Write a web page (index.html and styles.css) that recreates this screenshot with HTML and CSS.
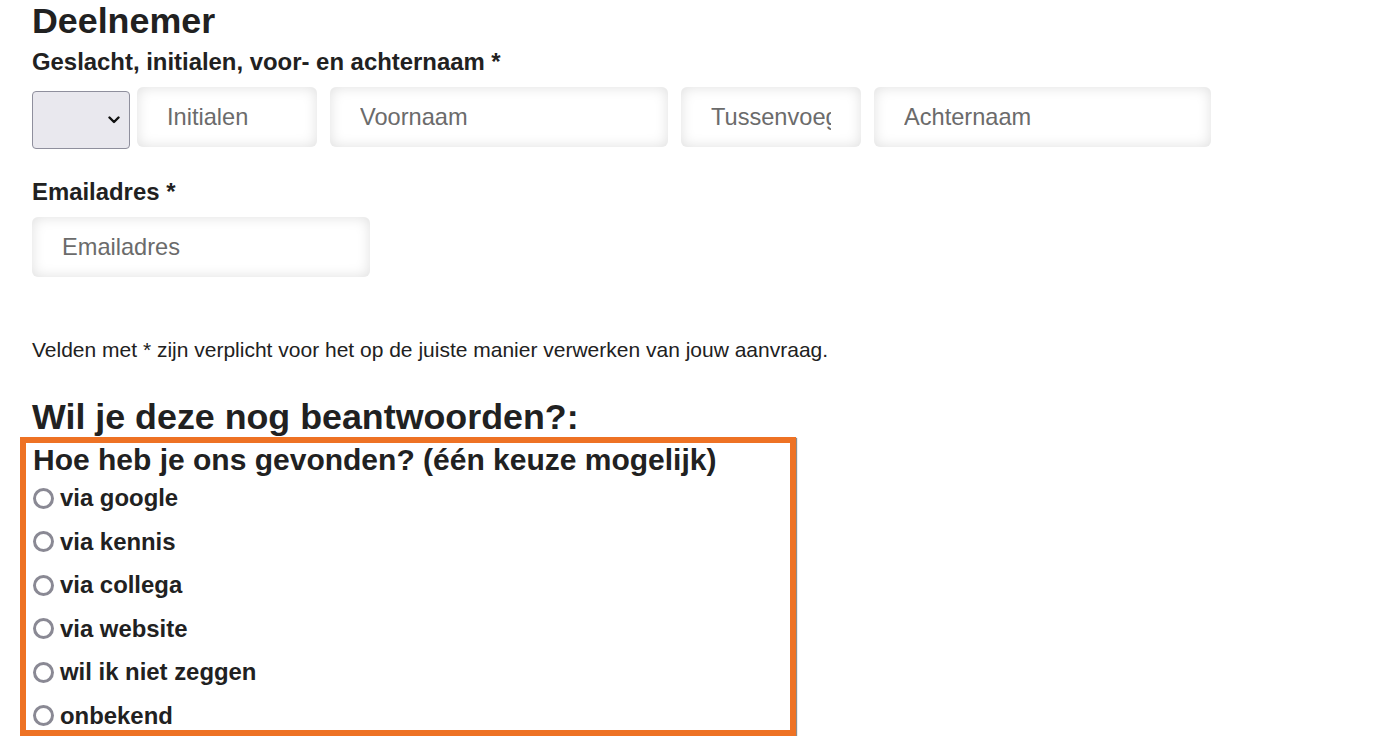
FILE: index.html
```html
<!DOCTYPE html>
<html lang="nl">
<head>
    <meta charset="UTF-8">
    <meta name="viewport" content="width=device-width, initial-scale=1.0">
    <title>Deelnemer</title>
    <link rel="stylesheet" href="styles.css">
</head>
<body>
    <div class="page">
        <h1 class="title">Deelnemer</h1>
        <label class="field-label">Geslacht, initialen, voor- en achternaam *</label>
        <div class="name-row">
            <div class="select-wrap">
                <select class="gender">
                    <option></option>
                    <option>Dhr.</option>
                    <option>Mevr.</option>
                </select>
                <svg class="chevron" width="12" height="8" viewBox="0 0 12 8">
                    <path d="M1.5 1.5 L6 6 L10.5 1.5" fill="none" stroke="#111" stroke-width="2.4" stroke-linecap="round" stroke-linejoin="round"/>
                </svg>
            </div>
            <input class="text-input small" type="text" placeholder="Initialen">
            <input class="text-input wide" type="text" placeholder="Voornaam">
            <input class="text-input small" type="text" placeholder="Tussenvoegsel">
            <input class="text-input wide last" type="text" placeholder="Achternaam">
        </div>

        <label class="field-label email-label">Emailadres *</label>
        <input class="text-input wide" type="email" placeholder="Emailadres">

        <p class="note">Velden met * zijn verplicht voor het op de juiste manier verwerken van jouw aanvraag.</p>

        <h2 class="title subtitle">Wil je deze nog beantwoorden?:</h2>
        <div class="question-box">
            <h3 class="question">Hoe heb je ons gevonden? (één keuze mogelijk)</h3>
            <label class="option"><input type="radio" name="found"> via google</label>
            <label class="option"><input type="radio" name="found"> via kennis</label>
            <label class="option"><input type="radio" name="found"> via collega</label>
            <label class="option"><input type="radio" name="found"> via website</label>
            <label class="option"><input type="radio" name="found"> wil ik niet zeggen</label>
            <label class="option"><input type="radio" name="found"> onbekend</label>
        </div>
    </div>
</body>
</html>
```

FILE: styles.css
```css
* { box-sizing: border-box; }
body {
    margin: 0;
    padding: 0;
    font-family: "Liberation Sans", Arial, sans-serif;
    color: #212121;
    background: #ffffff;
}
.page {
    padding: 0 0 0 32px;
}
.title {
    margin: 0;
    font-size: 35.8px;
    line-height: 42px;
    font-weight: bold;
}
.field-label {
    display: block;
    margin-top: 6px;
    font-size: 23.9px;
    line-height: 28px;
    font-weight: bold;
}
.email-label { margin-top: 29px; }
.name-row {
    display: flex;
    align-items: flex-start;
    margin-top: 11px;
}
.select-wrap {
    position: relative;
    margin-top: 4px;
    margin-right: 7px;
}
.gender {
    appearance: none;
    -webkit-appearance: none;
    display: block;
    width: 98px;
    height: 58px;
    background: #e9e8ee;
    border: 1px solid #8f8f9d;
    border-radius: 4px;
    font-family: inherit;
    font-size: 20px;
    padding: 0 30px 0 10px;
}
.chevron {
    position: absolute;
    left: 76px;
    top: 25px;
    pointer-events: none;
}
.text-input {
    display: block;
    height: 60px;
    margin: 11px 13px 0 0;
    padding: 0 30px;
    border: none;
    border-radius: 6px;
    background: #ffffff;
    box-shadow: inset 0 0 14px rgba(0, 0, 0, 0.13);
    font-family: inherit;
    font-size: 23.6px;
    color: #333;
}
.name-row .text-input { margin-top: 0; }
.text-input::placeholder { color: #6b6b6b; }
.text-input.small { width: 180px; }
.text-input.wide { width: 338px; }
.text-input.last { width: 337px; }
.note {
    margin: 61px 0 0 0;
    font-size: 21px;
    line-height: 24px;
}
.subtitle { margin-top: 34px; }
.question-box {
    width: 776px;
    margin: -1px 0 0 -12px;
    padding: 0 7px 0 7px;
    border: 6px solid #ee7224;
    box-shadow: 1px 1px 1px rgba(0, 0, 0, 0.45);
}
.question {
    margin: 0 0 7px 0;
    font-size: 30px;
    line-height: 34px;
    font-weight: bold;
}
.option {
    display: flex;
    align-items: center;
    font-size: 23.9px;
    line-height: 28px;
    font-weight: bold;
    margin-top: 15.6px;
}
.question + .option { margin-top: 0; }
.option input {
    appearance: none;
    -webkit-appearance: none;
    flex: none;
    width: 21px;
    height: 21px;
    margin: 0 6px 0 0;
    border: none;
    border-radius: 50%;
    background: #fff;
    box-shadow: inset 0 0 0 3px #8a8994;
}
.option input:checked {
    background: radial-gradient(#1a73e8 45%, #fff 50%);
}
```
